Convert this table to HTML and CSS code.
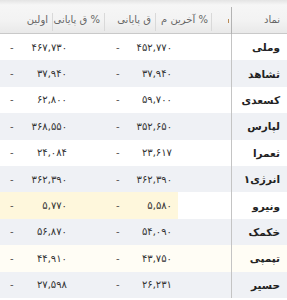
FILE: index.html
```html
<!DOCTYPE html>
<html lang="fa" dir="rtl">
<head>
<meta charset="utf-8">
<link rel="stylesheet" href="styles.css">
</head>
<body>
<div class="grid">
  <div class="thead">
    <div class="th th-name">نماد</div>
    <div class="th th-blank"><span class="mark"></span></div>
    <div class="th th-w56">% آخرین م</div>
    <div class="th th-w51">ق پایانی</div>
    <div class="th th-w52">% ق پایانی</div>
    <div class="th th-w52 th-last">اولین</div>
  </div>
  <div class="tbody">
    <div class="row"><div class="name">وملی</div><div class="blank"></div><div class="cell"><span>۴۵۲,۷۷۰</span><span>-</span></div><div class="gap"></div><div class="cell"><span>۴۶۷,۷۳۰</span><span>-</span></div></div>
    <div class="row alt"><div class="name">ثشاهد</div><div class="blank"></div><div class="cell"><span>۳۷,۹۴۰</span><span>-</span></div><div class="gap"></div><div class="cell"><span>۳۷,۹۴۰</span><span>-</span></div></div>
    <div class="row"><div class="name">کسعدی</div><div class="blank"></div><div class="cell"><span>۵۹,۷۰۰</span><span>-</span></div><div class="gap"></div><div class="cell"><span>۶۲,۸۰۰</span><span>-</span></div></div>
    <div class="row alt"><div class="name">لپارس</div><div class="blank"></div><div class="cell"><span>۳۵۲,۶۵۰</span><span>-</span></div><div class="gap"></div><div class="cell"><span>۳۶۸,۵۵۰</span><span>-</span></div></div>
    <div class="row"><div class="name">ثعمرا</div><div class="blank"></div><div class="cell"><span>۲۳,۶۱۷</span><span>-</span></div><div class="gap"></div><div class="cell"><span>۲۴,۰۸۴</span><span>-</span></div></div>
    <div class="row alt"><div class="name">انرژی۱</div><div class="blank"></div><div class="cell"><span>۳۶۲,۳۹۰</span><span>-</span></div><div class="gap"></div><div class="cell"><span>۳۶۲,۳۹۰</span><span>-</span></div></div>
    <div class="row hl"><div class="name">ونیرو</div><div class="blank"></div><div class="cell"><span>۵,۵۸۰</span><span>-</span></div><div class="gap"></div><div class="cell"><span>۵,۷۷۰</span><span>-</span></div></div>
    <div class="row alt"><div class="name">خکمک</div><div class="blank"></div><div class="cell"><span>۵۴,۰۹۰</span><span>-</span></div><div class="gap"></div><div class="cell"><span>۵۶,۸۷۰</span><span>-</span></div></div>
    <div class="row soft"><div class="name">تپمپی</div><div class="blank"></div><div class="cell"><span>۴۳,۷۵۰</span><span>-</span></div><div class="gap"></div><div class="cell"><span>۴۴,۹۱۰</span><span>-</span></div></div>
    <div class="row alt"><div class="name">حسیر</div><div class="blank"></div><div class="cell"><span>۲۶,۲۳۱</span><span>-</span></div><div class="gap"></div><div class="cell"><span>۲۷,۵۹۸</span><span>-</span></div></div>
  </div>
</div>
</body>
</html>
```

FILE: styles.css
```css
* { box-sizing: border-box; }
html, body { margin: 0; padding: 0; background: #fff; }
body {
  width: 287px;
  height: 300px;
  overflow: hidden;
  font-family: "DejaVu Sans", sans-serif;
}
.grid { width: 287px; }

.thead {
  display: flex;
  height: 34px;
  background: linear-gradient(#e4e4e4 0px, #f6f6f6 5px, #f3f3f3 20px, #e9e9e9 33px);
  border-bottom: 1px solid #c9c9c9;
}
.th {
  position: relative;
  height: 33px;
  padding: 14px 4px 0 4px;
  font-size: 10px;
  line-height: 12px;
  color: #666;
  white-space: nowrap;
  text-align: right;
}
.th::before {
  content: "";
  position: absolute;
  left: 0;
  top: 13px;
  bottom: 2px;
  width: 1px;
  background: #d9d9d9;
}
.th-last::before { display: none; }
.th-name { width: 56px; padding-right: 7px; }
.th-name::before { top: 7px; bottom: -1px; background: #b3b3b3; }
.th-blank { width: 20px; }
.th-w56 { width: 56px; padding-right: 3px; }
.th-w51 { width: 51px; }
.th-w52 { width: 52px; }
.mark {
  position: absolute;
  left: 17px;
  top: 19px;
  width: 1px;
  height: 4px;
  background: #b98a55;
}

.row {
  display: grid;
  grid-template-columns: 56px 53px 72px 33px 73px;
  height: 26.4px;
  align-items: stretch;
}
.row.alt { background: #eff1f5; }
.row.soft { background: #fffdf5; }
.row.hl .cell, .row.hl .gap { background: #fef7dc; }

.name {
  border-left: 1px solid #c4c4c4;
  padding-right: 7px;
  display: flex;
  align-items: center;
  font-size: 10.5px;
  font-weight: bold;
  color: #222;
}
.cell {
  display: flex;
  justify-content: space-between;
  align-items: center;
  padding: 0 6px 0 10px;
  font-size: 10px;
  color: #333;
  direction: rtl;
}
.cell span:last-child { color: #555; }
```
